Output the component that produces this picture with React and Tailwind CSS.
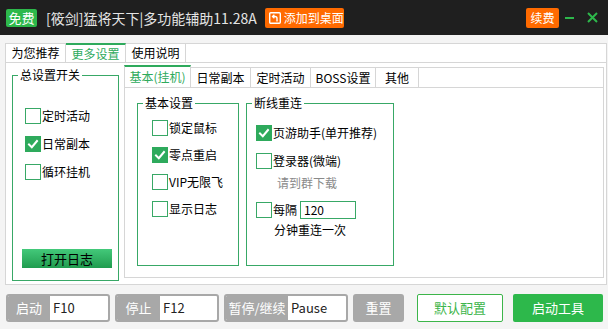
import React from "react";

const Check = ({ checked }) => (
  <span
    className={
      checked
        ? "w-[16px] h-[16px] shrink-0 flex items-center justify-center bg-[#2eaa5c] border border-[#2eaa5c]"
        : "w-[16px] h-[16px] shrink-0 flex items-center justify-center bg-white border border-[#38a866]"
    }
  >
    {checked && (
      <svg width="12" height="12" viewBox="0 0 12 12" fill="none" stroke="white" strokeWidth="2" strokeLinecap="square">
        <path d="M2 6.5 L4.8 9.2 L10 3" />
      </svg>
    )}
  </span>
);

const Row = ({ checked, label }) => (
  <div className="flex items-center gap-[1px] h-[16px]">
    <Check checked={checked} />
    <span className="leading-[16px]">{label}</span>
  </div>
);

const KeyBox = ({ label, value, w, lw }) => (
  <div className={`${w} h-[28px] flex rounded-[3px] border-2 border-[#a8a8a8] bg-white overflow-hidden`}>
    <div className={`${lw} bg-[#a8a8a8] text-white text-[13px] flex items-center justify-center`}>{label}</div>
    <div className="flex-1 flex items-center pl-[3px] text-[13px] text-[#222]">{value}</div>
  </div>
);

export default function App() {
  return (
    <div className="w-[608px] h-[329px] bg-[#f4f4f4] flex flex-col text-[12px] text-black font-['Noto_Sans_CJK_SC',sans-serif] overflow-hidden">
      {/* title bar */}
      <div className="h-[35px] shrink-0 bg-[#1f1f1f] flex items-center pl-[6px] pr-[10px]">
        <span className="w-[31px] h-[18px] bg-[#2db84b] rounded-[2px] text-white text-[13px] leading-[18px] text-center">免费</span>
        <span className="ml-[9px] text-[#e4e4e4] text-[14px] leading-[18px]">[筱剑]猛将天下|多功能辅助11.28A</span>
        <span className="ml-[8px] w-[79px] h-[20px] bg-[#ff6a00] rounded-[2px] flex items-center pl-[4px] gap-[3px] text-white text-[12px]">
          <svg width="12" height="12" viewBox="0 0 12 12" fill="none" stroke="white" strokeWidth="1.4">
            <rect x="0.7" y="0.7" width="10.6" height="10.6" rx="1" />
            <path d="M8 9.5 V6.5 a2 2 0 0 0 -2 -2 H3.8" />
            <path d="M5.4 2.8 L3.6 4.5 L5.4 6.2" />
          </svg>
          添加到桌面
        </span>
        <div className="flex-1" />
        <span className="w-[33px] h-[20px] bg-[#ff6a00] rounded-[2px] text-white text-[12px] leading-[20px] text-center">续费</span>
        <span className="ml-[6px] w-[9px] h-[2px] bg-[#2db84b]" />
        <svg className="ml-[13px]" width="11" height="11" viewBox="0 0 11 11" stroke="#2db84b" strokeWidth="2">
          <path d="M1 1 L10 10 M10 1 L1 10" />
        </svg>
      </div>

      {/* main tabs */}
      <div className="mt-[8px] ml-[5px] w-[602px]">
        <div className="flex h-[19px] border-l border-r border-[#d6d6d6] bg-white">
          <div className="w-[60px] border-t border-r border-[#d6d6d6] flex items-center justify-center">为您推荐</div>
          <div className="w-[60px] border-t-2 border-t-[#2eaa5c] border-r border-r-[#d6d6d6] flex items-center justify-center text-[#2eaa5c]">更多设置</div>
          <div className="w-[60px] border-t border-r border-[#d6d6d6] flex items-center justify-center">使用说明</div>
          <div className="flex-1 border-t border-[#d6d6d6]" />
        </div>

        <div className="h-[223px] border border-[#d6d6d6] bg-white flex pl-[6px] gap-[5px]">
          {/* left group */}
          <fieldset className="mt-[4px] w-[107px] h-[214px] border border-[#38a866] flex flex-col">
            <legend className="ml-[5px] px-[2px] leading-[16px]">总设置开关</legend>
            <div className="flex flex-col pl-[12px] pt-[25px] gap-[12px]">
              <Row label="定时活动" />
              <Row checked label="日常副本" />
              <Row label="循环挂机" />
            </div>
            <button className="mt-[69px] ml-[9px] w-[90px] h-[19px] bg-gradient-to-b from-[#43c97a] to-[#1f9c4f] text-[13px] leading-[19px] text-black">
              打开日志
            </button>
          </fieldset>

          {/* right tabs */}
          <div className="mt-[2px] w-[480px] flex flex-col">
            <div className="h-[22px] flex items-end">
              <div className="w-[67px] h-[22px] border-t-2 border-t-[#2eaa5c] border-x border-x-[#d6d6d6] flex items-center justify-center text-[#2eaa5c]">基本(挂机)</div>
              <div className="w-[60px] h-[20px] border-t border-r border-[#d6d6d6] flex items-center justify-center">日常副本</div>
              <div className="w-[60px] h-[20px] border-t border-r border-[#d6d6d6] flex items-center justify-center">定时活动</div>
              <div className="w-[65px] h-[20px] border-t border-r border-[#d6d6d6] flex items-center justify-center">BOSS设置</div>
              <div className="w-[43px] h-[20px] border-t border-r border-[#d6d6d6] flex items-center justify-center">其他</div>
              <div className="flex-1 h-[20px] border-t border-r border-[#d6d6d6]" />
            </div>
            <div className="h-[191px] border border-[#d6d6d6] flex pl-[12px] pt-[7px] gap-[7px]">
              <fieldset className="w-[102px] h-[171px] border border-[#38a866]">
                <legend className="ml-[5px] px-[2px] leading-[16px]">基本设置</legend>
                <div className="flex flex-col pl-[14px] pt-[9px] gap-[11px]">
                  <Row label="锁定鼠标" />
                  <Row checked label="零点重启" />
                  <Row label="VIP无限飞" />
                  <Row label="显示日志" />
                </div>
              </fieldset>
              <fieldset className="w-[148px] h-[171px] border border-[#38a866]">
                <legend className="ml-[5px] px-[2px] leading-[16px]">断线重连</legend>
                <div className="flex flex-col pl-[9px] pt-[14px]">
                  <Row checked label="页游助手(单开推荐)" />
                  <div className="mt-[12px]">
                    <Row label="登录器(微端)" />
                  </div>
                  <span className="mt-[6px] ml-[21px] leading-[16px] text-[#8a8a8a]">请到群下载</span>
                  <div className="mt-[10px] h-[18px] flex items-center gap-[1px]">
                    <Check />
                    <span className="leading-[16px]">每隔</span>
                    <div className="ml-[2px] w-[56px] h-[18px] border border-[#38a866] flex items-center pl-[3px] text-[12px]">120</div>
                  </div>
                  <span className="mt-[3px] ml-[18px] leading-[16px]">分钟重连一次</span>
                </div>
              </fieldset>
            </div>
          </div>
        </div>
      </div>

      {/* bottom bar */}
      <div className="mt-[9px] ml-[6px] flex h-[28px]">
        <KeyBox label="启动" value="F10" w="w-[104px]" lw="w-[42px]" />
        <div className="ml-[5px]">
          <KeyBox label="停止" value="F12" w="w-[104px]" lw="w-[43px]" />
        </div>
        <div className="ml-[5px]">
          <KeyBox label="暂停/继续" value="Pause" w="w-[124px]" lw="w-[62px]" />
        </div>
        <button className="ml-[5px] w-[51px] h-[28px] rounded-[3px] bg-[#a8a8a8] text-white text-[13px]">重置</button>
        <button className="ml-[13px] w-[86px] h-[28px] rounded-[2px] border border-[#3cb54a] bg-white text-[#3cb54a] text-[13px]">默认配置</button>
        <button className="ml-[10px] w-[90px] h-[28px] rounded-[2px] bg-[#2db84b] text-white text-[13px]">启动工具</button>
      </div>
    </div>
  );
}
